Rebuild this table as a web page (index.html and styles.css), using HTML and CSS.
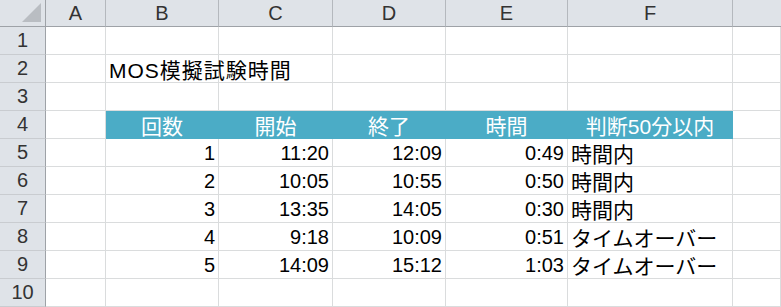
FILE: index.html
```html
<!DOCTYPE html>
<html lang="ja">
<head>
<meta charset="utf-8">
<link rel="stylesheet" href="styles.css">
</head>
<body>
<div class="sheet">
  <div class="hd corner"><span class="tri"></span></div>
  <div class="hd col">A</div>
  <div class="hd col">B</div>
  <div class="hd col">C</div>
  <div class="hd col">D</div>
  <div class="hd col">E</div>
  <div class="hd col">F</div>
  <div class="hd col last"></div>

  <div class="hd row">1</div>
  <div class="c"></div><div class="c"></div><div class="c"></div><div class="c"></div><div class="c"></div><div class="c"></div><div class="c"></div>

  <div class="hd row">2</div>
  <div class="c"></div><div class="c title">MOS模擬試験時間</div><div class="c"></div><div class="c"></div><div class="c"></div><div class="c"></div><div class="c"></div>

  <div class="hd row">3</div>
  <div class="c"></div><div class="c"></div><div class="c"></div><div class="c"></div><div class="c"></div><div class="c"></div><div class="c"></div>

  <div class="hd row">4</div>
  <div class="c"></div>
  <div class="c th">回数</div>
  <div class="c th">開始</div>
  <div class="c th">終了</div>
  <div class="c th">時間</div>
  <div class="c th">判断50分以内</div>
  <div class="c"></div>

  <div class="hd row">5</div>
  <div class="c"></div><div class="c num">1</div><div class="c num">11:20</div><div class="c num">12:09</div><div class="c num">0:49</div><div class="c txt">時間内</div><div class="c"></div>

  <div class="hd row">6</div>
  <div class="c"></div><div class="c num">2</div><div class="c num">10:05</div><div class="c num">10:55</div><div class="c num">0:50</div><div class="c txt">時間内</div><div class="c"></div>

  <div class="hd row">7</div>
  <div class="c"></div><div class="c num">3</div><div class="c num">13:35</div><div class="c num">14:05</div><div class="c num">0:30</div><div class="c txt">時間内</div><div class="c"></div>

  <div class="hd row">8</div>
  <div class="c"></div><div class="c num">4</div><div class="c num">9:18</div><div class="c num">10:09</div><div class="c num">0:51</div><div class="c txt">タイムオーバー</div><div class="c"></div>

  <div class="hd row">9</div>
  <div class="c"></div><div class="c num">5</div><div class="c num">14:09</div><div class="c num">15:12</div><div class="c num">1:03</div><div class="c txt">タイムオーバー</div><div class="c"></div>

  <div class="hd row">10</div>
  <div class="c"></div><div class="c"></div><div class="c"></div><div class="c"></div><div class="c"></div><div class="c"></div><div class="c"></div>
</div>
</body>
</html>
```

FILE: styles.css
```css
* { box-sizing: border-box; }
html, body { margin: 0; padding: 0; background: #fff; }
body {
  font-family: "Liberation Sans", "Noto Sans CJK JP", sans-serif;
  font-size: 20px;
  color: #000;
  overflow: hidden;
}
.sheet {
  display: grid;
  grid-template-columns: 46px 60px 113px 114px 113px 122px 165px 1fr;
  grid-template-rows: 27px repeat(10, 28px);
  width: 781px;
  height: 307px;
}
.hd {
  background: #dfe3e8;
  color: #333;
  display: flex;
  align-items: center;
  justify-content: center;
  font-size: 20px;
}
.col {
  border-right: 1px solid #b4b8bd;
  border-bottom: 1px solid #9ea2a7;
}
.col.last { border-right: none; }
.row {
  border-right: 1px solid #9ea2a7;
  border-bottom: 1px solid #c9ccd0;
}
.corner {
  position: relative;
  border-right: 1px solid #9ea2a7;
  border-bottom: 1px solid #9ea2a7;
}
.tri {
  position: absolute;
  right: 4px;
  bottom: 4px;
  width: 0;
  height: 0;
  border-left: 19px solid transparent;
  border-bottom: 19px solid #b9bdc2;
}
.c {
  border-right: 1px solid #dadcdd;
  border-bottom: 1px solid #dadcdd;
  display: flex;
  align-items: center;
  white-space: nowrap;
  padding: 1px 3px 0;
}
.title {
  overflow: visible;
  padding-left: 3px;
  font-size: 21px;
  letter-spacing: 1px;
}
.th {
  background: #4bacc6;
  border-right-color: #4bacc6;
  border-bottom-color: #4bacc6;
  color: #fff;
  font-size: 21px;
  justify-content: center;
}
.num { justify-content: flex-end; }
.txt {
  justify-content: flex-start;
  font-size: 21px;
}
```
